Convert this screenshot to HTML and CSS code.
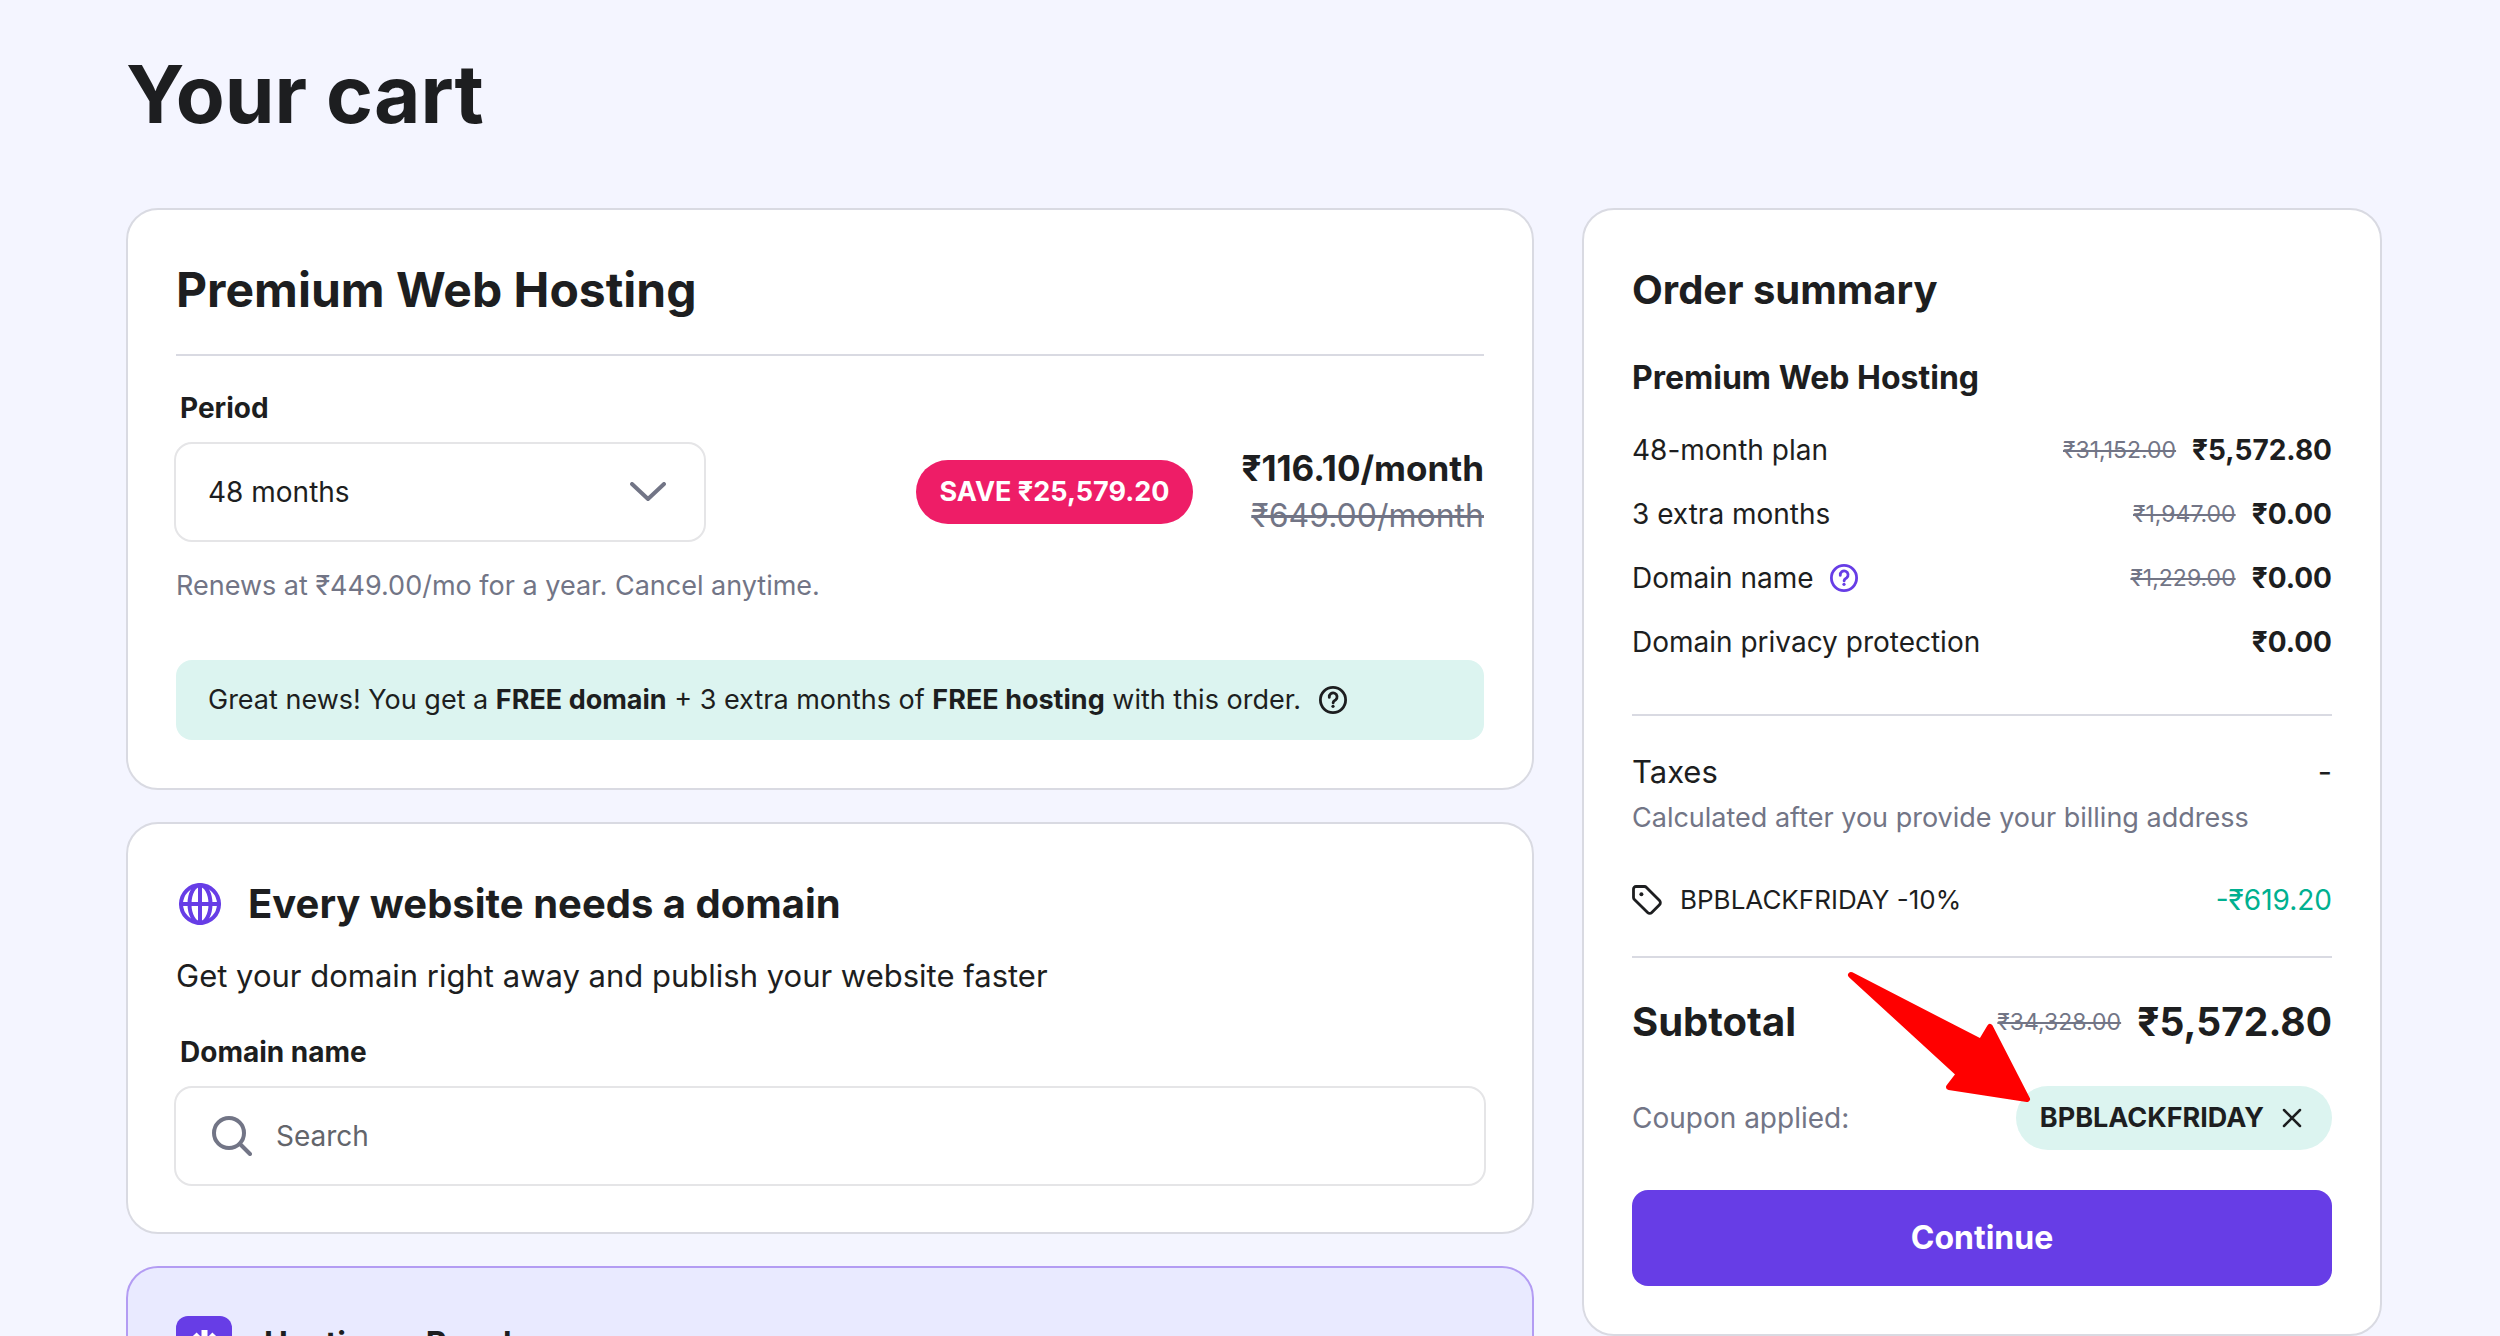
FILE: index.html
```
<!DOCTYPE html>
<html lang="en">
<head>
    <meta charset="UTF-8">
    <meta name="viewport" content="width=device-width, initial-scale=1.0">
    <title>Your cart</title>
    <link rel="stylesheet" href="styles.css">
</head>
<body>

    <main class="page">
        <h1>Your cart</h1>

        <div class="layout">
            <div class="column">

                <section class="card">
                    <h2 class="plan-title">Premium Web Hosting</h2>

                    <label class="field-label" for="period">Period</label>
                    <div class="period-row">
                        <div class="select-wrap">
                            <select id="period">
                                <option>48 months</option>
                                <option>24 months</option>
                                <option>12 months</option>
                                <option>1 month</option>
                            </select>
                            <svg class="chevron" viewBox="0 0 36 20" width="36" height="20">
                                <path d="M2 2l16 15L34 2" />
                            </svg>
                        </div>
                        <div class="offer">
                            <span class="save">SAVE ₹25,579.20</span>
                            <div class="price">
                                <strong>₹116.10/month</strong>
                                <s>₹649.00/month</s>
                            </div>
                        </div>
                    </div>
                    <p class="note">Renews at ₹449.00/mo for a year. Cancel anytime.</p>

                    <div class="banner">
                        <span>Great news! You get a <b>FREE domain</b> + 3 extra months of <b>FREE hosting</b> with this order.</span>
                        <svg class="help" viewBox="0 0 28 28" width="28" height="28">
                            <circle cx="14" cy="14" r="12.6" />
                            <path d="M10.3 11.3a3.9 3.9 0 1 1 6.3 2.600c-1.500 1.100-2.400 1.400-2.500 2.900" />
                            <circle class="dot" cx="14" cy="20.3" r="1.6" />
                        </svg>
                    </div>
                </section>

                <section class="card card-domain">
                    <h2 class="domain-title">
                        <svg class="globe" viewBox="0 0 48 48" width="48" height="48">
                            <circle cx="24" cy="24" r="19" />
                            <ellipse cx="24" cy="24" rx="10.5" ry="19" />
                            <path d="M24 5v38M5 24h38" />
                        </svg>
                        Every website needs a domain
                    </h2>
                    <p class="lead">Get your domain right away and publish your website faster</p>

                    <label class="field-label" for="domain">Domain name</label>
                    <div class="search">
                        <svg class="magnifier" viewBox="0 0 40 40" width="40" height="40">
                            <circle cx="17" cy="17" r="15" />
                            <path d="M28 28l10 10" />
                        </svg>
                        <input type="text" id="domain" placeholder="Search">
                    </div>
                </section>

                <section class="card card-reach">
                    <svg viewBox="0 0 56 56" width="56" height="56">
                        <rect width="56" height="56" rx="12" fill="#673de6" />
                        <path d="M28.5 14v28M14 28h28M18.5 18.5l19 19M38.5 18.5l-19 19" stroke="#fff" stroke-width="6" />
                    </svg>
                    <h2>Hostinger Reach</h2>
                </section>

            </div>

            <aside class="card summary">
                <h2>Order summary</h2>
                <h3>Premium Web Hosting</h3>

                <ul class="items">
                    <li>
                        <span>48-month plan</span>
                        <span class="amount"><s>₹31,152.00</s><b>₹5,572.80</b></span>
                    </li>
                    <li>
                        <span>3 extra months</span>
                        <span class="amount"><s>₹1,947.00</s><b>₹0.00</b></span>
                    </li>
                    <li>
                        <span class="with-help">Domain name
                            <svg class="help purple" viewBox="0 0 28 28" width="28" height="28">
                                <circle cx="14" cy="14" r="12.6" />
                                <path d="M10.3 11.3a3.9 3.9 0 1 1 6.3 2.600c-1.500 1.100-2.400 1.400-2.500 2.900" />
                                <circle class="dot" cx="14" cy="20.3" r="1.6" />
                            </svg>
                        </span>
                        <span class="amount"><s>₹1,229.00</s><b>₹0.00</b></span>
                    </li>
                    <li>
                        <span>Domain privacy protection</span>
                        <span class="amount"><b>₹0.00</b></span>
                    </li>
                </ul>

                <div class="taxes">
                    <div class="row taxes-row">
                        <span>Taxes</span>
                        <span>-</span>
                    </div>
                    <p>Calculated after you provide your billing address</p>
                    <div class="row discount">
                        <span class="code">
                            <svg class="tag" viewBox="0 0 30 30" width="30" height="30">
                                <path d="M1.500 4a2.500 2.500 0 0 1 2.500-2.500h8.400a3 3 0 0 1 2.100.9l13 13.200a3 3 0 0 1 0 4.200l-7.700 7.700a3 3 0 0 1-4.200 0L2.400 14.500a3 3 0 0 1-.9-2.100z" />
                                <circle class="dot" cx="9.400" cy="9.200" r="2" />
                            </svg>
                            BPBLACKFRIDAY -10%
                        </span>
                        <span class="green">-₹619.20</span>
                    </div>
                </div>

                <div class="row subtotal">
                    <strong>Subtotal</strong>
                    <span class="amount"><s>₹34,328.00</s><strong>₹5,572.80</strong></span>
                </div>

                <div class="row coupon">
                    <span>Coupon applied:</span>
                    <div class="chip">
                        BPBLACKFRIDAY
                        <button type="button" class="remove" aria-label="Remove coupon">
                            <svg viewBox="0 0 20 20" width="20" height="20">
                                <path d="M2 2l16 16M18 2L2 18" />
                            </svg>
                        </button>
                        <!-- Arrow pointing at the coupon -->
                        <svg class="arrow" viewBox="0 0 184 132" width="184" height="132">
                            <path d="M4 4L134 71L143 56L180 128L102 116L112 103Z" />
                        </svg>
                    </div>
                </div>

                <button type="button" class="continue">Continue</button>
            </aside>
        </div>
    </main>

</body>
</html>
```
FILE: styles.css
```
/* Global Styles */
* {
    box-sizing: border-box;
}

body {
    margin: 0;
    font-family: Inter, "Noto Sans", sans-serif;
    font-size: 28px;
    line-height: 40px;
    color: #1d1e20;
    background-color: #f4f5ff;
}

h1, h2, h3, p, ul {
    margin: 0;
    padding: 0;
}

svg {
    display: block;
    flex: none;
}

select, input, button {
    font: inherit;
    color: inherit;
}

/* Page Layout */
.page {
    padding: 48px 118px 0 126px;
}

h1 {
    font-size: 80px;
    line-height: 92px;
    margin-bottom: 68px;
}

.layout {
    display: grid;
    grid-template-columns: minmax(0, 44fr) minmax(0, 25fr);
    gap: 48px;
    align-items: start;
}

.column {
    display: flex;
    flex-direction: column;
    gap: 32px;
}

.card {
    background-color: #fff;
    border: 2px solid #d9dae2;
    border-radius: 32px;
    padding: 48px;
}

/* Hosting Plan */
.plan-title {
    font-size: 48px;
    line-height: 64px;
    padding-bottom: 32px;
    border-bottom: 2px solid #d9dae2;
    margin-bottom: 32px;
}

.field-label {
    display: block;
    font-weight: 700;
    padding-left: 4px;
    margin-bottom: 14px;
}

.period-row {
    display: flex;
    justify-content: space-between;
    align-items: center;
    margin-left: -2px;
}

.select-wrap {
    position: relative;
    width: 532px;
}

select {
    appearance: none;
    display: block;
    width: 100%;
    height: 100px;
    padding: 0 32px;
    border: 2px solid #e5e5e7;
    border-radius: 18px;
    background-color: #fff;
}

.chevron {
    position: absolute;
    right: 40px;
    top: 40px;
    fill: none;
    stroke: #727586;
    stroke-width: 4;
    stroke-linecap: round;
    stroke-linejoin: round;
    pointer-events: none;
}

.offer {
    display: flex;
    align-items: center;
    gap: 48px;
}

.save {
    padding: 0 24px;
    border-radius: 32px;
    font-size: 27px;
    line-height: 64px;
    font-weight: 700;
    color: #fff;
    background-color: #ee1d67;
}

.price {
    display: flex;
    flex-direction: column;
    text-align: right;
    line-height: 48px;
}

.price strong {
    font-size: 35px;
}

.price s {
    font-size: 32px;
    color: #727586;
}

.note {
    margin-top: 24px;
    font-size: 27px;
    color: #727586;
}

.banner {
    display: flex;
    align-items: center;
    gap: 18px;
    margin-top: 54px;
    padding: 20px 32px;
    border-radius: 16px;
    font-size: 27px;
    background-color: #dcf4f0;
}

/* Icons */
.help, .tag, .globe, .magnifier {
    fill: none;
    stroke: #1d1e20;
    stroke-width: 2.800;
    stroke-linecap: round;
    stroke-linejoin: round;
}

.help .dot, .tag .dot {
    fill: #1d1e20;
    stroke: none;
}

.help.purple {
    stroke: #673de6;
}

.help.purple .dot {
    fill: #673de6;
}

.globe {
    stroke: #673de6;
    stroke-width: 4;
}

.magnifier {
    stroke: #727586;
    stroke-width: 4;
}

/* Domain Search */
.card-domain {
    padding-bottom: 46px;
}

.domain-title {
    display: flex;
    align-items: center;
    gap: 24px;
    font-size: 40px;
    line-height: 64px;
}

.lead {
    margin: 16px 0 32px;
    font-size: 31px;
    line-height: 48px;
}

.search {
    display: flex;
    align-items: center;
    gap: 24px;
    height: 100px;
    margin: 0 -2px;
    padding: 0 36px;
    border: 2px solid #e5e5e7;
    border-radius: 18px;
}

.search input {
    flex: 1;
    min-width: 0;
    border: none;
    padding: 0;
    outline: none;
}

.search input::placeholder {
    color: #63656b;
    opacity: 1;
}

/* Reach Card */
.card-reach {
    display: flex;
    align-items: center;
    gap: 32px;
    background-color: #e9eaff;
    border-color: #b39cf3;
}

.card-reach h2 {
    font-size: 32px;
    line-height: 48px;
}

/* Order Summary */
.summary h2 {
    font-size: 40px;
    line-height: 64px;
    margin-bottom: 32px;
}

.summary h3 {
    font-size: 32px;
    line-height: 48px;
    margin-bottom: 16px;
}

.items {
    list-style: none;
    padding-bottom: 40px;
    border-bottom: 2px solid #d9dae2;
}

.items li, .row {
    display: flex;
    justify-content: space-between;
    align-items: center;
}

.items li {
    line-height: 64px;
}

.with-help {
    display: flex;
    align-items: center;
    gap: 16px;
}

.amount {
    display: flex;
    gap: 16px;
}

.amount s {
    font-size: 23px;
    color: #727586;
}

.taxes {
    padding: 32px 0 36px;
    border-bottom: 2px solid #d9dae2;
}

.taxes-row {
    font-size: 31px;
    line-height: 48px;
}

.taxes p {
    font-size: 27px;
    line-height: 44px;
    color: #727586;
}

.discount {
    margin-top: 40px;
}

.code {
    display: flex;
    align-items: center;
    gap: 18px;
    font-size: 26px;
}

.green {
    color: #00b090;
}

.subtotal {
    margin: 32px 0;
    line-height: 64px;
}

.subtotal strong {
    font-size: 40px;
}

.subtotal .amount strong {
    font-size: 39px;
}

.coupon {
    color: #727586;
}

.chip {
    position: relative;
    display: flex;
    align-items: center;
    gap: 18px;
    height: 64px;
    padding: 0 30px 0 24px;
    border-radius: 32px;
    font-size: 27px;
    font-weight: 700;
    color: #1d1e20;
    background-color: #dcf4f0;
}

.remove {
    padding: 0;
    border: none;
    background: none;
    cursor: pointer;
}

.remove path {
    stroke: #1d1e20;
    stroke-width: 2.500;
    stroke-linecap: round;
}

.arrow {
    position: absolute;
    right: 301px;
    bottom: 47px;
    pointer-events: none;
}

.arrow path {
    fill: #f00;
    stroke: #f00;
    stroke-width: 6;
    stroke-linejoin: round;
}

.continue {
    display: block;
    width: 100%;
    height: 96px;
    margin-top: 40px;
    border: none;
    border-radius: 16px;
    font-size: 32px;
    font-weight: 700;
    color: #fff;
    background-color: #673de6;
    cursor: pointer;
}
```
